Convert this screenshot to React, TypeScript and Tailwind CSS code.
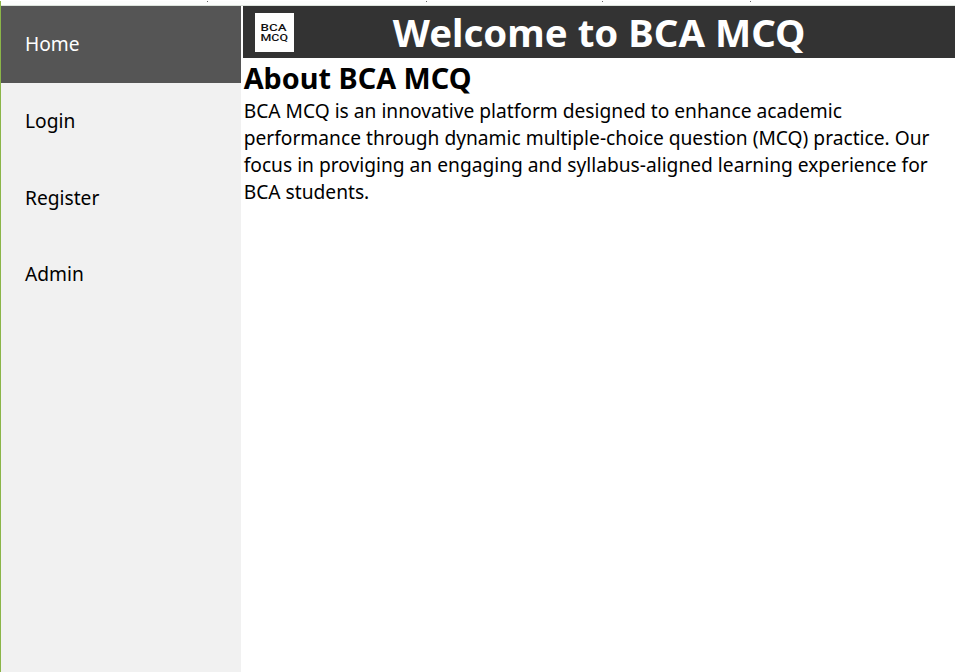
const items = ["Home", "Login", "Register", "Admin"];

export default function App() {
  return (
    <div className="flex h-[672px] w-[955px] flex-col overflow-hidden bg-white font-['Noto_Sans',sans-serif] text-black">
      <div className="h-px shrink-0 bg-white" />
      <div className="flex h-[5px] shrink-0">
        <div className="w-px bg-[#8bb548]" />
        <div className="flex flex-1 border-b border-[#dce3dc] bg-[#fcfdfc]">
          <span className="ml-[206px] h-px w-px bg-[#666]" />
          <span className="ml-[218px] h-px w-px bg-[#666]" />
          <span className="ml-[175px] h-px w-px bg-[#666]" />
          <span className="ml-[147px] h-px w-px bg-[#666]" />
        </div>
      </div>
      <div className="flex flex-1">
        <nav className="w-[241px] shrink-0 border-l border-[#8bb548] bg-[#f1f1f1]">
          {items.map((t) => (
            <a key={t} className={`flex h-[76.8px] items-center pl-6 text-[19.2px] ${t === "Home" ? "bg-[#555] text-white" : ""}`}>{t}</a>
          ))}
        </nav>
        <main className="ml-[2px] flex-1">
          <header className="flex h-[52px] items-center bg-[#333] pl-3">
            <svg className="h-[39px] w-[39px] font-['Roboto',sans-serif]" viewBox="0 0 39 39">
              <rect width="39" height="39" fill="#fff" />
              <g fontSize="9.4" fontWeight="500" fill="#111">
                <text x="5.5" y="18" textLength="26" lengthAdjust="spacingAndGlyphs">BCA</text>
                <text x="5.5" y="27.7" textLength="27.5" lengthAdjust="spacingAndGlyphs">MCQ</text>
              </g>
            </svg>
            <h1 className="ml-[98.8px] whitespace-nowrap text-[38.4px] font-bold leading-[52px] text-white">Welcome to BCA MCQ</h1>
          </header>
          <section className="pl-[0.7px]">
            <h2 className="text-[28.8px] font-bold leading-[40px]">About BCA MCQ</h2>
            <p className="-mt-px text-[19.2px] leading-[27px]">BCA MCQ is an innovative platform designed to enhance academic performance through dynamic multiple-choice question (MCQ) practice. Our focus in proviging an engaging and syllabus-aligned learning experience for BCA students.</p>
          </section>
        </main>
      </div>
    </div>
  );
}
